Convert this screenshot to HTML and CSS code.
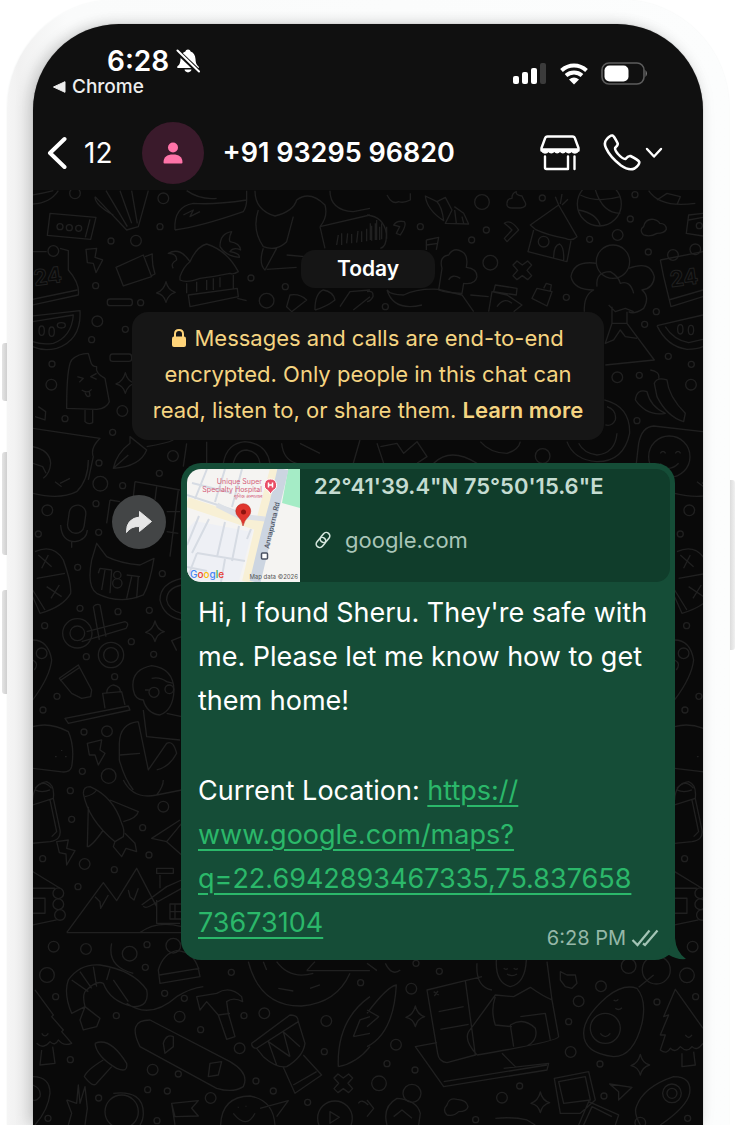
FILE: index.html
```html
<!DOCTYPE html>
<html lang="en">
<head>
<meta charset="utf-8">
<meta name="viewport" content="width=device-width, initial-scale=1">
<title>Chat</title>
<link rel="stylesheet" href="styles.css">
</head>
<body>
<div class="phone">
  <span class="side-key key-action"></span>
  <span class="side-key key-up"></span>
  <span class="side-key key-down"></span>
  <span class="side-key key-power"></span>
  <main class="screen">
    <header class="top">
      <div class="status">
        <div class="status-left">
          <div class="clock">6:28
            <svg class="bell" viewBox="0 0 24 24" width="24" height="24" aria-hidden="true"><path fill="#fff" d="M12 0.5c1.4 0 2.3.8 2.6 1.9 3 1 4.6 3.5 4.9 7.600.2 4 .8 5.500 3 7.500q1 1.500-.5 1.500H2q-1.500-.3-.5-1.700C3.800 15.300 4.200 14 4.500 10c.3-4 2-6.500 4.900-7.600C9.700 1.300 10.600.5 12 .5ZM8.500 20.600h7c-.5 3.700-6.500 3.700-7 0Z"/><path stroke="#101010" stroke-width="5" d="M1 2 23 23"/><path stroke="#fff" stroke-width="2" stroke-linecap="round" d="M1.500 1.500 23 22.500"/></svg>
          </div>
          <a class="return" href="#"><svg viewBox="0 0 13 12" width="13" height="12" aria-hidden="true"><path fill="#eee" stroke="#eee" stroke-linejoin="round" d="M.5 6 12 .7V11.300Z"/></svg>Chrome</a>
        </div>
        <div class="status-right">
          <svg viewBox="0 0 34 22" width="34" height="22" aria-label="Signal"><g fill="#fff"><rect x="0" y="13" width="6" height="8" rx="2"/><rect x="9" y="9" width="6" height="12" rx="2"/><rect x="18" y="5" width="6" height="16" rx="2"/></g><rect x="27" y="0" width="6" height="21" rx="2" fill="#3b3b3b"/></svg>
          <svg viewBox="0 0 28 22" width="28" height="22" aria-label="Wi-Fi"><g fill="none" stroke="#fff" stroke-width="4"><path d="M1.500 7.500Q7 2.500 14 2.500T26.500 7.500"/><path d="M6 12.500Q9.500 9.500 14 9.500T22 12.500"/></g><path fill="#fff" d="M9 16.500q5-4 10 0L14 21.500Z"/></svg>
          <svg viewBox="0 0 48 24" width="48" height="24" aria-label="Battery"><rect x="1" y="1" width="42" height="21" rx="7" fill="none" stroke="#5c5c5c" stroke-width="1.600"/><rect x="3.500" y="3.500" width="24" height="16" rx="5" fill="#fff"/><path fill="#777" d="M44.500 8q3 3.500 0 7Z"/></svg>
        </div>
      </div>
      <nav class="nav">
        <button class="back" aria-label="Back"><svg viewBox="0 0 20 34" width="20" height="34"><path fill="none" stroke="#fff" stroke-width="4" stroke-linecap="round" stroke-linejoin="round" d="M17.500 3 3 17 17.500 31"/></svg><span>12</span></button>
        <span class="avatar"><svg viewBox="0 0 20 22" width="20" height="22" aria-hidden="true"><g fill="#ff73a8"><circle cx="10" cy="5.500" r="5"/><path d="M.5 20.500C.5 15 4 12.500 10 12.500S19.500 15 19.500 20.500Q19.500 21.500 18.500 21.500H1.500Q.5 21.500.5 20.500Z"/></g></svg></span>
        <h1 class="number">+91 93295 96820</h1>
        <button class="icon" aria-label="Shop"><svg viewBox="0 0 40 36" width="40" height="36"><g fill="none" stroke="#fff" stroke-width="2.400" stroke-linecap="round" stroke-linejoin="round"><path d="M7.500 1.500H32.500Q34.500 1.500 35 3.500L38.500 13V15.500H1.500V13L5 3.500Q5.500 1.500 7.500 1.500Z"/><path fill="#fff" stroke-width="1.500" d="M1.500 14H38.500Q38 18 35 18 33 18 31.500 16 29 19.500 25.500 16 23 19.500 20 16 17 19.500 14.500 16 11 19.500 8.500 16 7 18 5 18 2 18 1.500 14Z"/><path d="M5 21.500V32.500Q5 34 6.500 34H28V21.500M34.500 21.500V34"/></g></svg></button>
        <button class="icon call" aria-label="Call"><svg viewBox="0 0 38 38" width="38" height="38"><path fill="none" stroke="#fff" stroke-width="2.600" stroke-linejoin="round" d="M3.500 5.500Q7 1 9.500 1.500 11 2 14.500 9 15.500 11 12.500 13.500 11 15 15 20 20 25.500 22.500 25 25 21.500 27.500 22 35.500 26 36.300 28 36.500 31 31.500 34.500 26 37 18 31.500 7 23 3 14 .5 9 3.500 5.500Z"/></svg><svg viewBox="0 0 18 12" width="18" height="12"><path fill="none" stroke="#fff" stroke-width="2.400" stroke-linecap="round" stroke-linejoin="round" d="M2 2 9 9.500 16 2"/></svg></button>
      </nav>
    </header>

    <section class="chat">
      <svg class="wallpaper" viewBox="33 190 670 935" preserveAspectRatio="xMidYMin slice" aria-hidden="true">
        <defs>
          <circle id="s" r="9"/><circle id="m" r="16"/><circle id="l" r="22"/>
          <path id="star" d="M0-32Q6-6 28 0 6 6 0 30-6 6-28 2-6-6 0-32Z"/>
          <path id="cross" d="M-28-16-16-28 0-16 16-28 28-16 14 0 28 16 16 28 0 16-16 28-28 16-14 0Z"/>
        </defs>
        <g transform="translate(0 180) scale(.3333)">
          <use href="#m" x="225" y="40"/><use href="#m" x="490" y="55"/><use href="#s" x="480" y="140"/><use href="#s" x="333" y="183"/><use href="#m" x="408" y="182"/><use href="#s" x="287" y="317"/><use href="#s" x="422" y="368"/><use href="#m" x="292" y="424"/><use href="#s" x="376" y="448"/><use href="#s" x="275" y="479"/><use href="#s" x="156" y="552"/><use href="#m" x="154" y="614"/><use href="#m" x="367" y="693"/><use href="#s" x="195" y="716"/><use href="#s" x="338" y="757"/><use href="#m" x="519" y="828"/><use href="#s" x="297" y="849"/><use href="#s" x="478" y="880"/><use href="#s" x="753" y="294"/><use href="#s" x="856" y="320"/><use href="#l" x="800" y="362"/>
          <use href="#s" x="180" y="140"/><use href="#s" x="208" y="143"/><use href="#s" x="236" y="145"/><use href="#m" x="160" y="213"/><use href="#star" x="498" y="337"/><use href="#star" x="376" y="610"/>
          <path d="M98 45Q130 40 160 32M98 72Q150 70 175 32M150 100 288 112 272 178 142 166ZM270 118 256 172M285 50 380 150 415 140 445 32M285 50Q285 75 340 105M318 32 382 140M360 32 395 130M395 32 412 130"/>
          <path d="M525 150Q520 80 580 70 640 75 740 60V32M525 150Q600 140 730 95 740 80 740 60M560 32Q600 60 650 55M550 105 580 90 570 110 600 95"/>
          <path d="M765 32Q765 90 825 108 880 95 890 60 930 30 975 75 985 110 960 140M775 90Q755 150 790 200 830 215 860 185L880 110M790 205Q775 250 795 270L830 205M860 225 940 232M800 268 890 262M960 140 1110 105M960 140 975 205M990 32Q990 90 1060 95L1110 85"/>
          <path d="M1010 195l5-30M1025 195v-35M1040 190l3-30M1055 190v-28M1070 188l4-35M1085 186v-32M1100 184v-38M1115 182v-45M1130 180v-60M1145 178v-48M1160 176v-36"/>
          <path d="M98 215H140M180 205 205 212V270Q240 310 235 345L98 375M98 358 232 330"/><text x="104" y="318" transform="rotate(-8 104 318)">24</text>
          <path d="M258 208 290 205 285 232 308 240 288 278 280 250 262 248ZM348 262 430 225 455 290 370 318ZM435 230l22-8q-2 30 8 60l-12 6"/>
          <rect x="322" y="357" width="75" height="20" rx="8"/><rect x="330" y="522" width="65" height="22" rx="8"/>
          <path d="M540 290Q550 260 570 245 590 200 620 192 680 210 715 275 700 285 690 280 640 290 600 295 560 310 540 300ZM570 245Q540 200 505 220 530 220 530 240 510 250 520 265M660 200Q660 160 695 155 685 175 690 185 720 190 722 210 700 200 690 215 720 220 718 232 680 230 660 200M560 310V340M565 345 712 325 715 350 570 380ZM590 305v30M620 300v30M640 295v35M660 292v30M700 285v40M712 355 740 362"/>
          <path d="M98 408 240 392Q245 480 170 505 130 515 98 500M98 425 220 405Q215 470 160 490 125 495 98 485"/><ellipse cx="125" cy="452" rx="8" ry="14"/><ellipse cx="155" cy="455" rx="8" ry="14"/><ellipse cx="184" cy="436" rx="12" ry="8"/>
          <path d="M200 685Q200 560 215 540 235 520 265 520L272 545Q275 560 290 560 285 580 315 595L328 665Q320 685 290 688ZM255 690V725Q265 735 278 728V690M232 590l18 5-12 12M290 580l-18 10 18 8M245 630q18 12 30-2M255 637q5 18 15 10l-2-12M115 680l22 15-2 25-30-10"/>
          <path d="M98 745 300 775Q270 805 280 830L265 900M98 800Q150 810 152 850 150 880 130 895M98 850l30 10 10 20M390 770 440 810Q420 860 340 865 350 820 390 790ZM340 865 385 825M440 800Q500 790 520 780M560 790l-10 70M620 785v70M670 850Q680 790 735 785 800 790 810 850M700 850Q710 810 740 810 775 815 780 850M845 790Q850 840 890 850M900 790 960 820M1060 850l20-70"/>
          <path d="M870 345Q900 340 920 360L875 395 860 380ZM945 390Q945 340 970 330 1000 335 1005 360 980 380 945 390M1020 380 1050 335 1110 330M1060 390 1110 350"/>
        </g>
        <g transform="translate(367 180) scale(.3333)">
          <use href="#l" x="345" y="66"/><use href="#s" x="526" y="54"/><use href="#s" x="160" y="140"/><use href="#s" x="358" y="150"/><use href="#s" x="314" y="180"/><use href="#l" x="370" y="248"/><use href="#s" x="598" y="352"/><use href="#s" x="668" y="178"/><use href="#m" x="752" y="165"/><use href="#s" x="790" y="117"/><use href="#s" x="804" y="44"/><use href="#s" x="844" y="216"/><use href="#s" x="868" y="395"/><use href="#s" x="833" y="433"/><use href="#s" x="904" y="529"/><use href="#s" x="973" y="553"/><use href="#m" x="972" y="614"/><use href="#m" x="751" y="592"/><use href="#s" x="817" y="586"/><use href="#s" x="810" y="722"/><use href="#l" x="527" y="828"/><use href="#s" x="55" y="380"/>
          <use href="#m" x="530" y="185"/><use href="#m" x="918" y="225"/><use href="#m" x="985" y="208"/><use href="#s" x="997" y="137"/><use href="#cross" x="466" y="271"/>
          <path d="M175 48Q180 90 230 122 225 80 210 65ZM210 65 235 52 255 90 235 130 305 132 290 100 262 80M268 130l-5-40M290 130l-5-20M420 70Q420 55 435 55 435 38 448 35 445 45 465 48 470 60 475 68 480 82 460 84H435Q418 84 420 70M60 45Q75 75 95 65 110 70 130 60V40M0 105Q50 110 58 160 60 200 40 205M10 130v50M25 130v50M38 140v40"/>
          <path d="M80 135Q90 120 112 125 120 135 100 165L88 160 98 140ZM412 130Q430 115 455 150L420 185 412 175 435 150 425 140ZM178 180 215 172 208 210M178 195l35-5M178 180v30"/>
          <path d="M490 135 575 75 630 170Q615 185 595 175 540 165 505 148ZM500 150 483 215 600 245 612 182M560 235Q560 195 578 192 592 200 590 242M575 75 565 50M580 72 585 42M585 75 603 58"/>
          <circle cx="697" cy="72" r="66"/><path d="M640 45Q690 70 760 50M635 90Q690 100 700 138M680 10Q700 100 760 100M845 32Q880 85 985 70M870 60l30-20 40 10-10 24M830 165Q815 150 830 140 835 115 860 118 875 122 878 130 898 130 898 148 892 160 870 160 850 172 830 165M1008 100 965 105 958 160 1008 168M965 120l43-8"/>
          <circle cx="738" cy="245" r="50"/><path d="M690 250Q620 240 612 290 620 330 680 330 650 345 652 395M785 265Q850 240 862 290 860 325 825 330 850 350 830 385 800 405 785 395M690 320Q685 275 730 275 755 290 760 310 790 300 800 340M725 375 745 395 775 385 800 395M735 380V430H780V395M735 430 715 490 740 480 760 450 775 470 810 475M780 430 862 540 715 555"/>
          <path d="M880 240 1008 215M880 240 890 290 912 380 1008 350M905 360 1008 330M870 437Q900 500 960 508 990 508 1008 500M870 437 1008 405M895 440Q920 480 965 488L1008 478"/><text x="912" y="322" transform="rotate(-8 912 322)">24</text><ellipse cx="940" cy="448" rx="8" ry="14"/><ellipse cx="972" cy="450" rx="8" ry="14"/>
          <path d="M225 265Q215 230 245 225 260 200 285 215 305 225 298 262 330 265 330 290 325 315 290 310L285 340Q240 340 215 330ZM245 300q10-20 35-5M385 315 450 325 448 345 380 335ZM365 395 375 335 420 345 465 375 440 395M390 380q20-30 45-10M510 325 555 335 540 378 495 355ZM530 325l8-15 15 5-3 18"/>
          <path d="M60 330Q70 345 110 345 150 325 215 328L285 345 320 395M0 335Q20 330 18 350 10 365 0 365M60 330Q80 395 165 375M310 345 365 350M862 610Q870 590 900 600 905 650 955 700L950 725Q900 710 870 650ZM805 660Q810 625 840 635 850 680 895 700 840 710 805 660M850 570q30 5 25 25"/>
          <path d="M712 660Q790 680 788 760 770 845 690 845 620 840 600 785M720 680Q750 690 745 720 735 740 715 735M750 760Q745 820 690 825 650 820 635 790M1008 755 860 738Q825 740 815 790L808 850M880 820q8-12 16 0M925 820q8-12 16 0M880 850Q905 880 935 850M30 790 50 850M40 800 90 790 110 820 150 785 180 830 150 850M200 850Q250 800 330 850M340 785Q370 820 420 820 455 810 460 785"/><circle cx="907" cy="830" r="62"/>
        </g>
        <g transform="translate(0 460) scale(.3333)">
          <g id="left-edge">
            <use href="#m" x="142" y="151"/><use href="#s" x="115" y="222"/><use href="#s" x="134" y="497"/><use href="#m" x="125" y="580"/><use href="#s" x="171" y="709"/><use href="#s" x="129" y="750"/>
            <path d="M98 100Q180 120 230 95 265 60 265 0M165 65l20 15M180 70l30-15M105 275Q160 250 190 300 215 370 212 400 190 440 120 460L98 410M110 355 195 340M115 285l40 35M145 285l-20 40M140 380l45 30M178 375l-25 40M98 390 135 450M98 540Q145 540 155 600 150 650 98 720M98 600q20 10 5 30M98 800Q150 785 205 815 225 860 215 920 210 940 180 935L98 925M165 890h5M195 890h5M185 870v3M105 985Q130 955 155 985"/>
            <path d="M98 1020Q100 970 140 965 165 975 160 1015L180 1110Q185 1140 150 1145L98 1150M98 1035 160 1015M105 990q20 10 45 0M150 1020l20 95-15 15M98 1235 180 1285M98 1285H165M98 1315H135V1360H98M98 1395 170 1380"/><use href="#m" x="175" y="1300"/><use href="#m" x="175" y="1333"/><use href="#m" x="180" y="1365"/><use href="#s" x="128" y="1196"/>
          </g>
          <use href="#left-edge" x="1926"/>
          <use href="#l" x="301" y="71"/><use href="#s" x="368" y="77"/><use href="#s" x="288" y="131"/><use href="#s" x="296" y="217"/><use href="#s" x="233" y="322"/><use href="#s" x="487" y="341"/><use href="#s" x="240" y="445"/><use href="#s" x="354" y="455"/><use href="#s" x="448" y="451"/><use href="#s" x="394" y="545"/><use href="#s" x="259" y="590"/><use href="#s" x="461" y="583"/><use href="#s" x="344" y="650"/><use href="#s" x="252" y="816"/><use href="#m" x="321" y="814"/><use href="#s" x="247" y="934"/><use href="#l" x="326" y="948"/><use href="#star" x="465" y="515"/>
          <rect x="205" y="135" width="50" height="85" rx="25" transform="rotate(8 230 178)"/>
          <path d="M182 195Q185 245 225 245 260 240 262 210M215 245v18M405 65 540 90M405 65 400 110M470 80l-5 40M330 120l-10 70M330 120l30 5M535 90l-25 200M500 155h40M500 215l35 5M290 250 275 300Q260 380 290 400 360 435 430 405 450 370 462 295L420 315Q360 310 320 290ZM300 325l35 5-5 70M300 325l-5 15M315 330l-10 60M380 345l40 5M395 350l-15 65M415 350l-5 65M545 355Q480 370 480 420 490 470 545 480M545 375Q500 385 500 420 505 450 545 460"/>
          <circle cx="352" cy="345" r="11"/><circle cx="352" cy="370" r="14"/><circle cx="232" cy="520" r="44"/><use href="#l" x="232" y="520"/><circle cx="333" cy="585" r="38"/><use href="#l" x="333" y="585"/>
          <path d="M280 440Q290 430 300 435L318 530M280 440 298 540M245 545 378 505Q390 490 375 485L260 515M178 655 235 615 275 690 272 710 245 715 215 700ZM180 662 240 622M195 775 385 738 390 750 205 790ZM315 745 308 700 365 695 375 735M320 700Q320 680 340 675 365 680 360 698M545 530l-30 12 15 30"/>
          <path d="M400 690Q390 630 455 617 520 625 522 690 520 750 480 765 440 760 430 720 405 720 400 690M455 655Q480 650 500 665L520 670M435 690h12M430 750 440 830 540 840M545 770 500 760M415 785Q360 790 358 850V900Q375 960 400 990M415 785 445 930 500 850Q520 840 530 880 510 920 470 930M360 885 420 880M262 850 305 840 300 870 315 880 295 915 285 885 268 885Z"/><circle cx="462" cy="697" r="15"/><circle cx="508" cy="688" r="13"/>
        </g>
        <g transform="translate(0 780) scale(.3333)">
          <use href="#s" x="211" y="32"/><use href="#s" x="215" y="118"/><use href="#m" x="490" y="80"/><use href="#s" x="428" y="143"/><use href="#s" x="447" y="225"/><use href="#m" x="254" y="252"/><use href="#s" x="343" y="269"/><use href="#s" x="234" y="320"/><use href="#m" x="161" y="500"/><use href="#m" x="258" y="507"/><use href="#l" x="389" y="521"/><use href="#s" x="441" y="494"/><use href="#s" x="436" y="562"/><use href="#l" x="141" y="585"/><use href="#s" x="167" y="650"/><use href="#s" x="349" y="707"/><use href="#s" x="494" y="640"/><use href="#s" x="553" y="655"/><use href="#m" x="539" y="710"/><use href="#s" x="602" y="749"/><use href="#s" x="694" y="577"/><use href="#s" x="732" y="707"/><use href="#m" x="793" y="700"/><use href="#m" x="719" y="805"/><use href="#s" x="211" y="839"/><use href="#m" x="458" y="869"/><use href="#s" x="535" y="882"/><use href="#s" x="443" y="929"/><use href="#s" x="502" y="933"/><use href="#s" x="296" y="954"/><use href="#m" x="632" y="954"/><use href="#s" x="768" y="903"/><use href="#s" x="820" y="933"/><use href="#s" x="923" y="967"/><use href="#m" x="979" y="723"/><use href="#s" x="973" y="815"/><use href="#s" x="1082" y="608"/><use href="#s" x="144" y="1015"/><use href="#s" x="471" y="1022"/><use href="#l" x="520" y="497"/><use href="#cross" x="1030" y="910"/>
          <path d="M250 40Q250 20 270 20 340 50 365 130 375 150 370 170L345 185Q265 120 250 40M330 60 415 95Q410 115 370 125M265 80 262 200Q275 200 310 150M345 185 340 200 365 230 378 205 410 215 405 190 375 160M255 50q25-5 35-20M170 185 205 180 200 205 225 212 200 255 198 222 178 218ZM540 120 455 175 500 185 545 130M500 185 545 225M370 0Q400 60 470 45L545 30M470 45Q490 20 490 0"/>
          <path d="M200 458 310 308 350 362 410 265 470 380M200 458H545M285 350 300 365 302 385 325 345M385 330 390 350 402 360 415 325M425 375 500 320 545 300M430 378q5 8 20 0L545 325M470 360V430H540M470 265H520V280H470ZM480 285V325M510 372h35v45h-35zM510 395h35M525 372v45M420 458Q470 420 545 440"/>
          <path d="M215 700Q190 640 205 600 240 550 300 555 400 570 440 630 450 680 400 680 330 665 310 610 290 600 260 630 245 640 255 680ZM215 600 265 635M240 575 275 625M280 560 290 620M330 565 320 600M255 680 300 715 290 740 250 750 240 720ZM335 490Q320 560 400 580M380 670Q450 720 530 650 570 625 610 620M340 600 385 665"/>
          <path d="M475 570Q490 520 530 512 580 515 595 565L600 590 480 610ZM478 585 598 565M590 650 650 640Q690 615 725 650L728 665Q700 650 680 665L685 700 705 770 680 778 655 705 620 665 600 690ZM655 705 690 700M745 545Q780 680 905 678 1010 670 1050 580M790 545 800 570M835 625l45 8M930 625l30-10M830 545Q870 600 940 580M920 572H1110M920 572 945 545"/>
          <path d="M420 800Q380 720 450 720L690 845Q750 880 730 920 700 940 650 925ZM490 790Q500 760 520 770V800L495 820ZM630 850 665 845 655 885 625 890ZM755 790 870 705Q895 705 895 725L770 805Q755 805 755 790M770 805 790 830Q830 865 860 860 910 830 915 790L895 725M805 785 830 855M805 785 870 830M850 755 870 830M850 755 900 800M850 862 885 940 965 885 910 825M880 915 950 875"/>
          <path d="M1015 860Q1010 720 1110 650M1015 860Q1070 850 1110 800M1060 770 1080 720 1110 710M1060 770 1110 760M105 630 160 705 155 710 190 750 185 755 215 790Q190 800 175 780 165 800 150 785 130 810 110 790M125 760q10 15 20 0M125 810 120 855 165 850 158 800M285 790Q330 770 380 850 385 880 350 865 290 830 285 790M310 840Q260 870 253 890 280 925 290 910L335 860"/>
          <path d="M98 890Q150 890 150 940 145 990 105 1035M98 915Q125 925 120 950 110 965 98 960M200 960 215 1000 205 1035M200 960 230 970 235 915 240 970 255 920 262 985 255 1035M340 940Q430 930 430 1000 430 1020 420 1035M515 970 595 962 575 985 595 1008 525 1010ZM515 970 525 1035M662 1035Q665 950 750 948 820 960 825 1035M700 1000Q740 1050 765 1000M715 980v3M738 977v3M780 985 865 962 830 1010M990 995v35l28-18ZM1075 970q10-15 30 5"/><circle cx="365" cy="995" r="50"/><circle cx="1005" cy="1015" r="52"/>
        </g>
        <g transform="translate(367 900) scale(.3333)">
          <use href="#m" x="133" y="266"/><use href="#m" x="87" y="434"/><use href="#s" x="60" y="491"/><use href="#s" x="144" y="510"/><use href="#l" x="36" y="550"/><use href="#s" x="217" y="214"/><use href="#m" x="405" y="593"/><use href="#s" x="458" y="558"/><use href="#s" x="326" y="659"/><use href="#s" x="605" y="365"/><use href="#m" x="611" y="456"/><use href="#s" x="699" y="492"/><use href="#m" x="635" y="304"/><use href="#m" x="702" y="259"/><use href="#l" x="785" y="198"/><use href="#s" x="870" y="306"/><use href="#l" x="960" y="226"/><use href="#m" x="977" y="140"/><use href="#s" x="986" y="290"/><use href="#s" x="711" y="588"/><use href="#s" x="962" y="655"/><use href="#s" x="147" y="190"/><use href="#star" x="145" y="350"/><use href="#star" x="820" y="495"/><use href="#star" x="520" y="608"/>
          <path d="M0 440Q80 400 88 255 60 260 0 340M0 380 35 350 0 330M180 270 295 242 325 465 240 488Q215 485 212 460ZM295 242 345 230M215 335l75-15M220 388l85-15M200 275l15 10M202 288l11-15M330 465Q290 420 305 395L385 285 440 290 490 262Q530 290 555 300L575 410Q570 425 330 465M540 185 555 300M385 290Q370 330 385 375L435 380M440 440 430 375Q470 350 505 385 515 420 480 438M460 350 535 340 550 420M388 180Q385 250 430 260 475 250 478 180M330 190Q325 260 375 270M410 205q8 6 12 0M440 205q8 6 12 0M420 222q15 10 30 0"/>
          <path d="M210 428 145 440 230 560 540 510 545 490 410 505M230 545 540 495M405 460 445 500M650 400Q650 350 720 290 770 250 810 265 840 300 825 370 800 470 740 470 650 460 650 400M815 262 860 225M700 400q15 20 30 0M740 300q8 6 14-2M745 325q10 8 20-2M580 215l20 10 25 0 5 25-15 15-20-5-15-20Z"/><circle cx="868" cy="210" r="42"/><circle cx="715" cy="385" r="45"/>
          <path d="M1008 385 925 268 890 350 905 345 880 405 895 405 880 450Q900 465 910 445 925 460 940 440 960 460 975 440 990 455 1008 430M945 460V500L985 495 980 455M955 405q10 15 20 0M562 535 665 515 685 600 640 640 580 640ZM575 545 655 530 670 600 590 610ZM635 675 665 605 755 645 745 675M650 675 675 620 735 650M728 552 795 562 755 600V575ZM808 620Q830 560 920 530 975 530 968 580 960 620 880 675M808 620Q800 640 820 675"/><circle cx="915" cy="580" r="28"/><circle cx="915" cy="580" r="15"/><circle cx="820" cy="668" r="16"/>
          <path d="M240 645Q225 630 240 615 245 592 270 598 300 600 303 620 300 635 275 635 260 650 240 645M60 675Q45 620 90 595 150 600 160 640L155 675M80 650l25-20 30 25M385 655Q440 650 480 660L505 675M0 600 20 625 0 650M0 190l30 22M55 190q20 40 45 20"/><circle cx="135" cy="580" r="27"/>
        </g>
      </svg>

      <p class="day">Today</p>
      <p class="notice"><svg class="lock" viewBox="0 0 14 18" width="14" height="18" aria-hidden="true"><path fill="none" stroke="#ffd479" stroke-width="2" d="M3 9V5Q3 1 7 1T11 5V9"/><rect y="7.500" width="14" height="10.500" rx="2" fill="#ffd479"/></svg> Messages and calls are end-to-end encrypted. Only people in this chat can read, listen to, or share them. <a href="#">Learn more</a></p>

      <div class="row">
        <button class="forward" aria-label="Forward"><svg viewBox="0 0 28 24" width="28" height="24"><path fill="#e6e6e6" stroke="#e6e6e6" stroke-linejoin="round" d="M14.500 1.500 26.500 11.500 14.500 21.500V16.500Q6 16 1.500 22.500 1 8.500 14.500 7Z"/></svg></button>
        <article class="bubble">
          <a class="preview" href="#">
            <svg class="map" viewBox="0 0 113 113" width="113" height="113" aria-label="Map">
              <rect width="113" height="113" fill="#f5f4f2"/>
              <path fill="#eef0f5" d="M8 52 60 62 66 60 52 112H0V60Z"/>
              <path fill="#a5ecc6" d="M101 0H113V39L95 34Z"/>
              <path fill="none" stroke="#f8f0d5" stroke-width="10" d="M0 33 72 57M88 0 76 45 60 113"/>
              <g fill="none" stroke="#d6dbe3" stroke-width="2"><path d="M0 26 40 39 60 46M5 14 45 24M20 0 8 30M38 0 28 33M55 0 45 38M12 47 0 76M22 50 5 84M38 53 30 88M52 57 45 92M64 60 60 70M10 84 58 92M10 84 0 110M38 90 34 113M0 98 20 102"/></g>
              <path fill="none" stroke="#dde1e7" stroke-width="5" d="M30 36 52 47 78 50"/>
              <path fill="none" stroke="#ccd5e1" stroke-width="11" d="M96 0 88 34 80 63 68 113"/>
              <g class="map-place" text-anchor="end"><text x="75" y="15">Unique Super</text><text x="75" y="23">Specialty Hospital</text><text x="75" y="29" class="tiny">युनिक अस्पताल</text></g>
              <path fill="#e94e66" stroke="#fff" d="M83.500 10A6 6 0 0 1 86 21.500L83.500 25 81 21.500A6 6 0 0 1 83.500 10Z"/><path stroke="#fff" stroke-width="1.500" d="M81.500 13.500v5M85.500 13.500v5M81.500 16h4"/>
              <path fill="#e0352d" stroke="#b3261f" stroke-width=".5" d="M56 57Q55 51 51 47.500A7.500 7.500 0 1 1 61.500 47.500Q57.500 51 56 57Z"/><circle cx="56.500" cy="43" r="2.500" fill="#8f130e"/>
              <text class="map-road" transform="translate(82 80) rotate(-77)">Annapurna Rd</text>
              <rect x="74.500" y="84" width="6" height="6" rx="1" fill="#fff" stroke="#4a5162" stroke-width="1.500"/>
              <text class="map-logo" x="3" y="109"><tspan fill="#4285f4">G</tspan><tspan fill="#ea4335">o</tspan><tspan fill="#fbbc05">o</tspan><tspan fill="#4285f4">g</tspan><tspan fill="#34a853">l</tspan><tspan fill="#ea4335">e</tspan></text>
              <text class="map-data" x="111" y="110" text-anchor="end">Map data ©2026</text>
            </svg>
            <span class="preview-text">
              <strong>22°41'39.4"N 75°50'15.6"E</strong>
              <span class="host"><svg viewBox="0 0 18 18" width="18" height="18" aria-hidden="true"><g fill="none" stroke="#d5e6dd" stroke-width="1.600"><rect x="5.500" y="3" width="11" height="7" rx="3.500" transform="rotate(-50 11 6.500)"/><rect x="1.500" y="8" width="11" height="7" rx="3.500" transform="rotate(-50 7 11.500)"/></g></svg>google.com</span>
            </span>
          </a>
          <div class="text">
            <p>Hi, I found Sheru. They're safe with me. Please let me know how to get them home!</p>
            <p>Current Location: <a href="#">https://<br>www.google.com/maps?<br>q=22.6942893467335,75.837658<br>73673104</a></p>
          </div>
          <footer class="meta"><time>6:28 PM</time><svg viewBox="0 0 28 18" width="28" height="18" aria-label="Delivered"><g fill="none" stroke="#a3c4b5" stroke-width="2.200"><path d="M1.500 11 6.500 16 18.500 1.500M12 14.500 14 16 26.500 1.500"/></g></svg></footer>
          <svg class="tail" viewBox="0 0 20 22" width="20" height="22" aria-hidden="true"><path fill="#154d37" d="M0 18 9 0Q10 14 20 21 11 22 3 17Z"/></svg>
        </article>
      </div>
    </section>
  </main>
</div>
</body>
</html>
```
FILE: styles.css
```css
* { box-sizing: border-box; }

body {
  margin: 0;
  background: #fff;
  font-family: Inter, "Liberation Sans", sans-serif;
  color: #fff;
}

h1, p { margin: 0; font: inherit; }
button { border: 0; padding: 0; background: none; color: inherit; font: inherit; }
a { color: inherit; text-decoration: none; }
svg { display: block; flex: none; }

.phone {
  position: relative;
  display: flex;
  min-height: 100vh;
  margin: 0 8px 0 7px;
  padding: 24px 26px 0;
  border-radius: 108px 108px 0 0;
  background: linear-gradient(to right, #f5f5f5, #f1f1f1 12px, #fafbfb 60px, #fcfdfd);
  box-shadow: 0 0 2px #eef1f0;
}

.side-key { position: absolute; width: 5px; background: linear-gradient(to right, #e4e4e4, #cfcfcf); }
.key-action { left: -5px; top: 343px; height: 58px; border-radius: 3px 0 0 3px; }
.key-up { left: -5px; top: 452px; height: 103px; border-radius: 3px 0 0 3px; }
.key-down { left: -5px; top: 590px; height: 104px; border-radius: 3px 0 0 3px; }
.key-power { right: -6px; top: 480px; height: 170px; border-radius: 0 3px 3px 0; background: linear-gradient(to right, #dcdcdc, #f1f1f1); }

.screen {
  flex: 1;
  min-width: 0;
  display: flex;
  flex-direction: column;
  border-radius: 86px 86px 0 0;
  background: #101010;
  overflow: hidden;
  box-shadow: 0 0 1px #888, -5px 0 14px rgba(0, 0, 0, .16), 0 0 16px rgba(0, 0, 0, .06);
}

.status { display: flex; justify-content: space-between; padding: 21px 54px 25px 20px; }
.clock { display: flex; align-items: center; gap: 7px; margin-left: 54px; font-size: 28px; font-weight: 600; line-height: 32px; }
.return { display: flex; align-items: center; gap: 6px; font-size: 19px; font-weight: 500; line-height: 20px; color: #eee; }
.status-right { display: flex; align-items: center; gap: 13px; margin-top: 6px; }

.nav { display: flex; align-items: center; padding: 0 40px 6px 14px; }
.back { display: flex; align-items: center; gap: 17px; font-size: 28px; line-height: 32px; }
.avatar { display: grid; place-items: center; width: 62px; height: 62px; margin-left: 30px; border-radius: 50%; background: #3a1a2b; }
.number { flex: 1; margin-left: 18px; font-size: 27px; font-weight: 600; line-height: 32px; white-space: nowrap; }
.icon { display: flex; align-items: center; }
.call { gap: 4px; margin-left: 23px; }

.chat {
  position: relative;
  flex: 1;
  display: flex;
  flex-direction: column;
  align-items: center;
  padding: 60px 28px 100px 79px;
  background: #090909;
}
.wallpaper { position: absolute; left: 0; top: 0; width: 100%; height: 100%; fill: none; stroke: #202020; stroke-width: 4; stroke-linejoin: round; }
.wallpaper text { font-size: 66px; font-weight: 700; stroke-width: 3; }

.day, .notice, .row { position: relative; }
.day, .notice { margin-right: 51px; }
.day { padding: 0 36px; border-radius: 14px; background: #151515; font-size: 21px; font-weight: 600; line-height: 38px; }
.notice {
  width: 472px;
  margin-top: 24px;
  margin-bottom: 23px;
  padding: 8px 16px 12px;
  border-radius: 16px;
  background: #161616;
  color: #f5d481;
  font-size: 22px;
  line-height: 36px;
  text-align: center;
}
.notice a { font-weight: 600; }
.lock { display: inline-block; margin-right: 2px; vertical-align: -1px; }

.row { display: flex; align-items: flex-start; gap: 15px; width: 100%; }
.forward { display: grid; place-items: center; flex: none; width: 54px; height: 54px; margin-top: 32px; border-radius: 50%; background: #434546; }

.bubble { position: relative; flex: 1; min-width: 0; padding: 6px 5px 12px 6px; border-radius: 20px; background: #154d37; }
.preview { display: flex; border-radius: 14px; background: #103d2b; overflow: hidden; }
.preview-text { display: flex; flex-direction: column; gap: 26px; padding: 3px 14px; color: #c5dcd1; font-size: 22px; line-height: 28px; white-space: nowrap; }
.preview-text strong { font-weight: 600; }
.host { display: flex; align-items: center; gap: 13px; color: #a9c5b8; }

.map-place { fill: #d4607a; font-size: 7px; }
.map-place .tiny { font-size: 5px; }
.map-road { fill: #4a5162; font-size: 7px; font-weight: 500; }
.map-logo { font-size: 10px; font-weight: 500; }
.map-data { fill: #555; font-size: 6px; }

.text { display: flex; flex-direction: column; gap: 46px; padding: 9px 11px 0; font-size: 27px; line-height: 44px; }
.text a { color: #2bb86a; text-decoration: underline; text-decoration-thickness: 2px; text-underline-offset: 5px; }

.meta { display: flex; justify-content: flex-end; align-items: center; gap: 5px; margin-top: -17px; padding-right: 11px; color: #95b8a8; font-size: 20px; line-height: 20px; }
.tail { position: absolute; right: -11px; bottom: 0; }
```
